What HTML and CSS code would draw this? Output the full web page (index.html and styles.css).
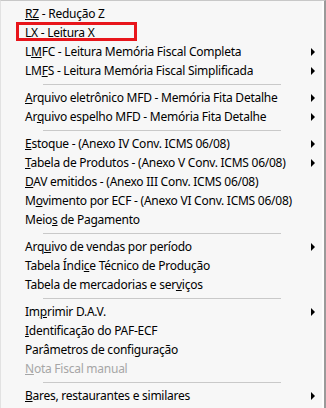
FILE: index.html
```html
<!DOCTYPE html>
<html lang="pt-BR">
<head>
<meta charset="utf-8">
<title>Menu</title>
<link rel="stylesheet" href="styles.css">
</head>
<body>
<div class="menu">
  <div class="item"><span class="label"><u>RZ</u> - Redução Z</span></div>
  <div class="item"><span class="label"><u>L</u>X - Leitura X</span></div>
  <div class="item"><span class="label">L<u>M</u>FC - Leitura Memória Fiscal Completa</span><span class="arrow"></span></div>
  <div class="item"><span class="label">LM<u>F</u>S - Leitura Memória Fiscal Simplificada</span><span class="arrow"></span></div>
  <div class="sep"></div>
  <div class="item"><span class="label"><u>A</u>rquivo eletrônico MFD - Memória Fita Detalhe</span><span class="arrow"></span></div>
  <div class="item"><span class="label">Ar<u>q</u>uivo espelho MFD - Memória Fita Detalhe</span><span class="arrow"></span></div>
  <div class="sep"></div>
  <div class="item"><span class="label"><u>E</u>stoque - (Anexo IV Conv. ICMS 06/08)</span><span class="arrow"></span></div>
  <div class="item"><span class="label"><u>T</u>abela de Produtos - (Anexo V Conv. ICMS 06/08)</span><span class="arrow"></span></div>
  <div class="item"><span class="label"><u>D</u>AV emitidos - (Anexo III Conv. ICMS 06/08)</span></div>
  <div class="item"><span class="label">M<u>o</u>vimento por ECF - (Anexo VI Conv. ICMS 06/08)</span></div>
  <div class="item"><span class="label">Meio<u>s</u> de Pagamento</span></div>
  <div class="sep"></div>
  <div class="item"><span class="label">Arq<u>u</u>ivo de vendas por período</span><span class="arrow"></span></div>
  <div class="item"><span class="label">Tabela Índi<u>c</u>e Técnico de Produção</span></div>
  <div class="item"><span class="label">Tabela de mercadorias e ser<u>v</u>iços</span></div>
  <div class="sep"></div>
  <div class="item"><span class="label">Im<u>p</u>rimir D.A.V.</span><span class="arrow"></span></div>
  <div class="item"><span class="label"><u>I</u>dentificação do PAF-ECF</span></div>
  <div class="item"><span class="label">Parâmetros de confi<u>g</u>uração</span></div>
  <div class="item disabled"><span class="label"><u>N</u>ota Fiscal manual</span></div>
  <div class="sep"></div>
  <div class="item"><span class="label"><u>B</u>ares, restaurantes e similares</span><span class="arrow"></span></div>
  <div class="highlight"></div>
</div>
</body>
</html>
```

FILE: styles.css
```css
html, body {
  margin: 0;
  padding: 0;
  background: #ffffff;
}

.menu {
  position: relative;
  width: 326px;
  height: 408px;
  box-sizing: border-box;
  background: #f7f7f7;
  border-top: 1px solid #c8c8c8;
  border-left: 1px solid #e2e2e2;
  border-right: 2px solid #9a9a9a;
  box-shadow: inset -2px 0 0 #fdfdfd;
  padding: 3px 0 0 0;
  font-family: "Noto Sans", "Open Sans", sans-serif;
  font-size: 12px;
  letter-spacing: -0.25px;
  color: #000;
}

.item {
  display: flex;
  align-items: center;
  height: 19px;
  line-height: 19px;
  padding-left: 24px;
  padding-right: 9px;
  white-space: nowrap;
}

.label u {
  text-decoration: underline;
  text-underline-offset: 1px;
  text-decoration-thickness: 1px;
}

.arrow {
  margin-left: auto;
  width: 0;
  height: 0;
  border-top: 4px solid transparent;
  border-bottom: 4px solid transparent;
  border-left: 4px solid #000;
  margin-top: 1px;
}

.disabled {
  color: #a6a6a6;
}

.sep {
  height: 8px;
  box-sizing: border-box;
  padding-top: 4px;
  padding-left: 42px;
  padding-right: 43px;
}

.sep::before {
  content: "";
  display: block;
  height: 1px;
  background: #c9c9c9;
}

.highlight {
  position: absolute;
  left: 15px;
  top: 21px;
  width: 121px;
  height: 19px;
  border: 3px solid #e8151b;
  box-sizing: border-box;
}
```
